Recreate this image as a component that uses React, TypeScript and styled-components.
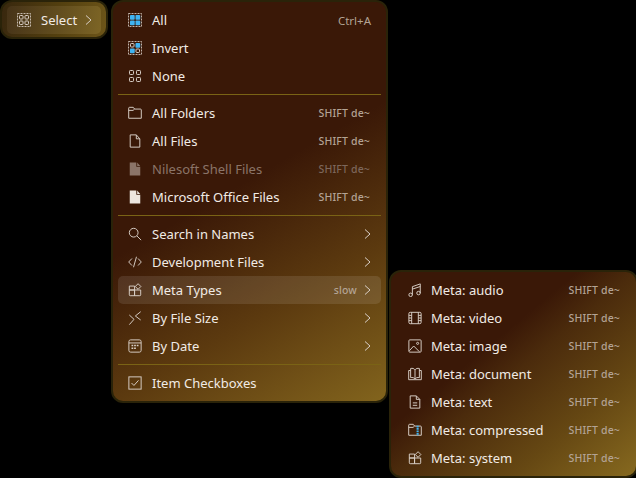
import React from "react";
import styled, { createGlobalStyle } from "styled-components";

const GlobalStyle = createGlobalStyle`
  html, body {
    margin: 0;
    background: #000;
    overflow: hidden;
  }
  body {
    font-family: "Noto Sans", "Open Sans", sans-serif;
  }
`;

const Stage = styled.div`
  width: 636px;
  height: 478px;
  display: grid;
  grid-template-columns: 108px 277px 247px;
  column-gap: 3px;
  align-items: start;
`;

const Panel = styled.div<{ $height: number }>`
  box-sizing: border-box;
  height: ${(p) => p.$height}px;
  padding: 4px 5px;
  border: 2px solid #2a2309;
  border-radius: 12px;
  background: linear-gradient(
    150deg,
    #3a1807 0%,
    #3a1807 46%,
    #5c3a0f 72%,
    #82641d 100%
  );
`;

const SubPanel = styled(Panel)`
  margin: 270px 0 0 -2px;
  background: linear-gradient(
    to bottom right,
    #3a1807 0%,
    #3a1807 38%,
    #4b2b0c 50%,
    #664813 75%,
    #86691f 100%
  );
`;

const SelectPanel = styled(Panel)`
  background: linear-gradient(100deg, #38270e 0%, #54400f 55%, #6d5519 100%);
`;

const Row = styled.div<{ $active?: boolean; $muted?: boolean }>`
  display: flex;
  align-items: center;
  height: 28px;
  padding: 0 10px;
  border-radius: 5px;
  font-size: 13px;
  color: ${(p) => (p.$muted ? "#8b7468" : "#f1ebe5")};
  background: ${(p) => (p.$active ? "rgba(255, 255, 255, 0.1)" : "transparent")};
`;

const SelectRow = styled(Row)`
  background: linear-gradient(100deg, #463318 0%, #65501f 60%, #7d6525 100%);
  padding: 0 9px 0 10px;
`;

const SubRow = styled(Row)`
  padding: 0 10px 0 12px;
`;

const IconSlot = styled.span`
  display: flex;
  width: 14px;
  height: 14px;
  flex: none;
  margin-right: 10px;
`;

const SubIconSlot = styled(IconSlot)`
  margin-right: 9px;
`;

const Label = styled.span`
  flex: 1;
  white-space: nowrap;
`;

const Hint = styled.span<{ $muted?: boolean }>`
  font-size: 11.5px;
  white-space: nowrap;
  color: ${(p) => (p.$muted ? "#7d675b" : "#b3a394")};
`;

const HintBold = styled(Hint)`
  font-size: 10.5px;
  font-weight: 500;
  letter-spacing: 0.15px;
  margin-right: 1px;
`;

const ChevronSlot = styled.span`
  display: flex;
  margin-left: 6px;
`;

const Divider = styled.div`
  height: 1px;
  margin: 4px 0;
  background: #7a6315;
`;

const Svg = ({
  children,
  color = "#d9cfc7",
  box = 16,
}: {
  children: React.ReactNode;
  color?: string;
  box?: number;
}) => (
  <svg
    width="14"
    height="14"
    viewBox={`0 0 ${box} ${box}`}
    fill="none"
    stroke={color}
    strokeWidth={box === 16 ? 1.1 : 1}
  >
    {children}
  </svg>
);

const Chevron = () => (
  <svg width="7" height="10" viewBox="0 0 7 10" fill="none" stroke="#d9cfc7">
    <path d="M1 .5 6 5 1 9.5" />
  </svg>
);

const BLUE = "#3fb4f2";

const Outline = () => (
  <rect x=".5" y=".5" width="13" height="13" strokeDasharray="2 1" strokeOpacity=".85" />
);

const grid = [
  [2.5, 2.5],
  [8, 2.5],
  [2.5, 8],
  [8, 8],
];

const Squares = ({ fill }: { fill?: number[] }) => (
  <>
    {grid.map(([x, y], i) =>
      fill?.includes(i) ? (
        <rect key={i} x={x - 0.5} y={y - 0.5} width="4.7" height="4.7" rx=".8" fill={BLUE} stroke="none" />
      ) : (
        <rect key={i} x={x} y={y} width="3.5" height="3.5" rx=".8" />
      ),
    )}
  </>
);

const appsIcon = (
  <Svg>
    <path d="M1.5 3.5h6V8h-6zM1.5 8h6v6.5h-5a1 1 0 0 1-1-1zM7.5 8h7v5.5a1 1 0 0 1-1 1h-6z" />
    <path d="M11.5 .8 14.7 4 11.5 7.2 8.3 4z" />
  </Svg>
);

const folderPath = "M.8 14V2.5a1 1 0 0 1 1-1H6l1.5 2h6.7a1 1 0 0 1 1 1V14zM.8 5h5L7.5 3.5";
const solidFilePath = "M2 15.5V.5h7.5v5H14v10zM10.5 .5 14 4.5h-3.5z";

const icons: Record<string, React.ReactNode> = {
  selectOutline: (
    <Svg box={14}>
      <Outline />
      <Squares />
    </Svg>
  ),
  all: (
    <Svg box={14}>
      <Outline />
      <Squares fill={[0, 1, 2, 3]} />
    </Svg>
  ),
  invert: (
    <Svg box={14}>
      <Outline />
      <Squares fill={[1, 2]} />
    </Svg>
  ),
  none: (
    <Svg box={14}>
      <rect x="1.5" y="1.5" width="4" height="4" rx=".8" />
      <rect x="8.5" y="1.5" width="4" height="4" rx=".8" />
      <rect x="1.5" y="8.5" width="4" height="4" rx=".8" />
      <rect x="8.5" y="8.5" width="4" height="4" rx=".8" />
    </Svg>
  ),
  folder: (
    <Svg>
      <path d={folderPath} />
    </Svg>
  ),
  file: (
    <Svg>
      <path d="M2.5 15V1h7l4 4.5V15zM9.5 1v4.5h4" />
    </Svg>
  ),
  fileMuted: (
    <Svg color="#8b7468">
      <path d={solidFilePath} fill="#8b7468" stroke="none" />
    </Svg>
  ),
  fileSolid: (
    <Svg color="#ece6e0">
      <path d={solidFilePath} fill="#ece6e0" stroke="none" />
    </Svg>
  ),
  search: (
    <Svg>
      <circle cx="6.5" cy="6.5" r="5" />
      <path d="M10.2 10.2 15 15" />
    </Svg>
  ),
  code: (
    <Svg>
      <path d="M4.5 4 .8 8l3.7 4M11.5 4l3.7 4-3.7 4M9.7 2 6.3 14" />
    </Svg>
  ),
  apps: appsIcon,
  size: (
    <Svg>
      <path d="M1.5 4.6 6.9 9.5 1.5 15.6M14.5 .8 8.4 5.7l6.1 4.6" />
    </Svg>
  ),
  date: (
    <Svg>
      <rect x="1" y="1" width="14" height="14" rx="2" />
      <path d="M1 4.5h14" />
      <path d="M4 7.5h2M7 7.5h2M10 7.5h2M4 10.5h2M7 10.5h2" strokeWidth="1.6" />
    </Svg>
  ),
  check: (
    <Svg>
      <rect x="1" y="1" width="14" height="14" />
      <path d="M4 8l2.8 2.8L12 5" />
    </Svg>
  ),
  audio: (
    <Svg>
      <circle cx="3" cy="13.5" r="2" />
      <circle cx="12" cy="11.5" r="2" />
      <path d="M5 13.5V4.2L14 1v10.5M5 7l9-3" />
    </Svg>
  ),
  video: (
    <Svg>
      <rect x="1" y="1.5" width="14" height="13" rx="1.5" />
      <path d="M4.2 1.5v13M11.8 1.5v13M1 5h3.2M1 8h3.2M1 11h3.2M11.8 5H15M11.8 8H15M11.8 11H15" />
    </Svg>
  ),
  image: (
    <Svg>
      <rect x="1" y="1" width="14" height="14" rx="1" />
      <circle cx="11" cy="5" r="1.2" />
      <path d="M1.5 13.5 6.5 8l6.5 6.5" />
    </Svg>
  ),
  book: (
    <Svg>
      <path d="M8 3.2C7 1.7 5 1.2 3 1.7v10.5c2-.5 4 0 5 1.5 1-1.5 3-2 5-1.5V1.7c-2-.5-4 0-5 1.5zM8 3.2v10.5M3 4H.8v10.5h14.4V4H13" />
    </Svg>
  ),
  text: (
    <Svg>
      <path d="M2.5 15V1h7l4 4V15zM9.5 1v4h4M5.5 9h5M5.5 11.8h5" />
    </Svg>
  ),
  zip: (
    <Svg>
      <path d={folderPath} />
      <path d="M11 3v11.5" stroke={BLUE} strokeWidth="2.4" strokeDasharray="2 .8" />
    </Svg>
  ),
};

type Item = {
  icon: string;
  label: string;
  hint?: string;
  bold?: boolean;
  sub?: boolean;
  muted?: boolean;
  active?: boolean;
};

const topItems: Item[] = [
  { icon: "all", label: "All", hint: "Ctrl+A" },
  { icon: "invert", label: "Invert" },
  { icon: "none", label: "None" },
];
const fileItems: Item[] = [
  { icon: "folder", label: "All Folders", hint: "SHIFT de~", bold: true },
  { icon: "file", label: "All Files", hint: "SHIFT de~", bold: true },
  { icon: "fileMuted", label: "Nilesoft Shell Files", hint: "SHIFT de~", bold: true, muted: true },
  { icon: "fileSolid", label: "Microsoft Office Files", hint: "SHIFT de~", bold: true },
];
const filterItems: Item[] = [
  { icon: "search", label: "Search in Names", sub: true },
  { icon: "code", label: "Development Files", sub: true },
  { icon: "apps", label: "Meta Types", hint: "slow", bold: true, sub: true, active: true },
  { icon: "size", label: "By File Size", sub: true },
  { icon: "date", label: "By Date", sub: true },
];
const metaItems: Item[] = [
  { icon: "audio", label: "Meta: audio" },
  { icon: "video", label: "Meta: video" },
  { icon: "image", label: "Meta: image" },
  { icon: "book", label: "Meta: document" },
  { icon: "text", label: "Meta: text" },
  { icon: "zip", label: "Meta: compressed" },
  { icon: "apps", label: "Meta: system" },
];

const MenuRow = ({ item }: { item: Item }) => {
  const HintText = item.bold ? HintBold : Hint;
  return (
    <Row $active={item.active} $muted={item.muted}>
      <IconSlot>{icons[item.icon]}</IconSlot>
      <Label>{item.label}</Label>
      {item.hint && <HintText $muted={item.muted}>{item.hint}</HintText>}
      {item.sub && (
        <ChevronSlot>
          <Chevron />
        </ChevronSlot>
      )}
    </Row>
  );
};

export default function App() {
  return (
    <>
      <GlobalStyle />
      <Stage>
        <SelectPanel $height={39}>
          <SelectRow>
            <IconSlot>{icons.selectOutline}</IconSlot>
            <Label>Select</Label>
            <ChevronSlot>
              <Chevron />
            </ChevronSlot>
          </SelectRow>
        </SelectPanel>
        <Panel $height={403}>
          {topItems.map((item) => (
            <MenuRow key={item.label} item={item} />
          ))}
          <Divider />
          {fileItems.map((item) => (
            <MenuRow key={item.label} item={item} />
          ))}
          <Divider />
          {filterItems.map((item) => (
            <MenuRow key={item.label} item={item} />
          ))}
          <Divider />
          <MenuRow item={{ icon: "check", label: "Item Checkboxes" }} />
        </Panel>
        <SubPanel $height={208}>
          {metaItems.map((item) => (
            <SubRow key={item.label}>
              <SubIconSlot>{icons[item.icon]}</SubIconSlot>
              <Label>{item.label}</Label>
              <HintBold>SHIFT de~</HintBold>
            </SubRow>
          ))}
        </SubPanel>
      </Stage>
    </>
  );
}
